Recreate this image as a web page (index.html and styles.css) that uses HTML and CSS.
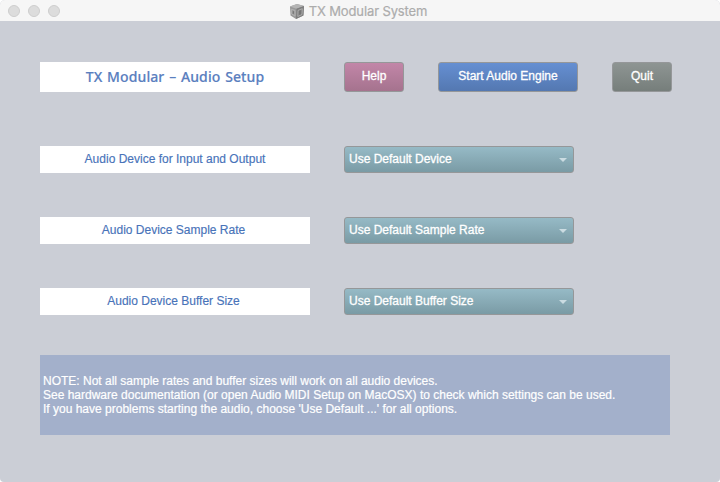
FILE: index.html
```html
<!DOCTYPE html>
<html lang="en">
<head>
<meta charset="utf-8">
<title>TX Modular System</title>
<link rel="stylesheet" href="styles.css">
</head>
<body>
<div class="window">
  <header class="titlebar">
    <div class="lights"><i></i><i></i><i></i></div>
    <div class="title">
      <svg class="cube" width="16" height="17" viewBox="0 0 16 17">
        <path d="M1 3.500 8 1l7 2-.6 9.500L7 16l-5.500-3.500z" fill="#999"/>
        <path d="M1 3.500 8 1l7 2-7.500 2.800z" fill="#b4b4b4"/>
        <path d="M7.500 5.800 15 3l-.6 9.500L7 16z" fill="#7d7d7d"/>
        <path d="M2.500 6.300 6 7.400v5.700L2.700 11zM9 7.400l4.300-1.700-.3 5.800-4.200 2z" fill="none" stroke="#b8b8b8" stroke-width=".8"/>
        <path d="M4.300 8.200v2.600M11 7.800v3.600" stroke="#707070" stroke-width="1"/>
      </svg>
      <span class="title-text">TX Modular System</span>
    </div>
  </header>
  <main class="panel">
    <section class="row toolbar">
      <h1 class="label heading"><span>TX Modular – Audio Setup</span></h1>
      <button class="btn help"><span>Help</span></button>
      <button class="btn start"><span>Start Audio Engine</span></button>
      <button class="btn quit"><span>Quit</span></button>
    </section>
    <section class="settings">
      <div class="row">
        <div class="label"><span>Audio Device for Input and Output</span></div>
        <div class="select"><span>Use Default Device</span><svg width="8" height="4" viewBox="0 0 8 4"><path d="M0 0h8L4 4z"/></svg></div>
      </div>
      <div class="row">
        <div class="label padded"><span>Audio Device Sample Rate</span></div>
        <div class="select"><span>Use Default Sample Rate</span><svg width="8" height="4" viewBox="0 0 8 4"><path d="M0 0h8L4 4z"/></svg></div>
      </div>
      <div class="row">
        <div class="label padded"><span>Audio Device Buffer Size</span></div>
        <div class="select"><span>Use Default Buffer Size</span><svg width="8" height="4" viewBox="0 0 8 4"><path d="M0 0h8L4 4z"/></svg></div>
      </div>
    </section>
    <section class="note">
      <p>NOTE: Not all sample rates and buffer sizes will work on all audio devices.</p>
      <p>See hardware documentation (or open Audio MIDI Setup on MacOSX) to check which settings can be used.</p>
      <p>If you have problems starting the audio, choose 'Use Default ...' for all options.</p>
    </section>
  </main>
</div>
</body>
</html>
```
FILE: styles.css
```css
* { box-sizing: border-box; }
body {
  margin: 0;
  background: #fff;
  font: 12px/14px "Liberation Sans", Arial, sans-serif;
}
.window {
  height: 482px;
  overflow: hidden;
  border-radius: 5px 5px 4px 4px;
  background: #cbced6;
}
.titlebar {
  display: grid;
  grid-template-columns: 1fr auto 1fr;
  align-items: center;
  height: 21px;
  background: #f6f6f6;
}
.lights { display: flex; gap: 8px; padding: 1px 0 0 8px; }
.lights i {
  width: 12px;
  height: 12px;
  border: 1px solid #cdcdcd;
  border-radius: 50%;
  background: #dcdcdc;
}
.title { display: flex; align-items: center; gap: 4px; padding: 1px 4px 0 0; }
.title-text {
  color: #acacac;
  font: 13px/16px Inter, sans-serif;
  letter-spacing: -.12px;
  -webkit-text-stroke: .2px #acacac;
}
.panel { padding: 41px 48px 0 40px; }
.row { display: flex; gap: 34px; }
.label {
  display: flex;
  flex: none;
  align-items: center;
  justify-content: center;
  width: 270px;
  height: 27px;
  margin: 0;
  padding-bottom: 2px;
  background: #fff;
  color: #4873b9;
  -webkit-text-stroke: .15px #4873b9;
}
.padded { padding-right: 3px; }
.heading {
  height: 30px;
  padding-bottom: 0;
  font: 500 14px/18px "Noto Sans", sans-serif;
  letter-spacing: .1px;
  word-spacing: 1px;
  color: #5b80bf;
}
.btn {
  flex: none;
  width: 60px;
  height: 30px;
  padding: 0 0 2px;
  border: 1px solid #959799;
  border-radius: 3px;
  color: #fff;
  font: 12px/14px "Liberation Sans", Arial, sans-serif;
  -webkit-text-stroke: .3px #fff;
}
.help { background: linear-gradient(#c286a8, #a5738e); }
.start { width: 140px; background: linear-gradient(#658fd2, #5478b1); }
.quit { background: linear-gradient(#8e9593, #767e7b); }
.settings { display: grid; gap: 44px; margin-top: 54px; }
.select {
  display: flex;
  align-items: center;
  justify-content: space-between;
  width: 230px;
  height: 27px;
  padding: 0 6px 1px 4px;
  border: 1px solid #959799;
  border-radius: 3px;
  background: linear-gradient(#96bac6, #7a9ba5);
  color: #fff;
  -webkit-text-stroke: .3px #fff;
}
.select svg { fill: #cbdce2; margin-top: 2px; }
.note {
  width: 630px;
  height: 80px;
  margin-top: 40px;
  padding: 19px 3px;
  background: #a3b0cb;
  color: #fff;
  white-space: nowrap;
  -webkit-text-stroke: .2px #fff;
}
.note p { margin: 0; }
```
